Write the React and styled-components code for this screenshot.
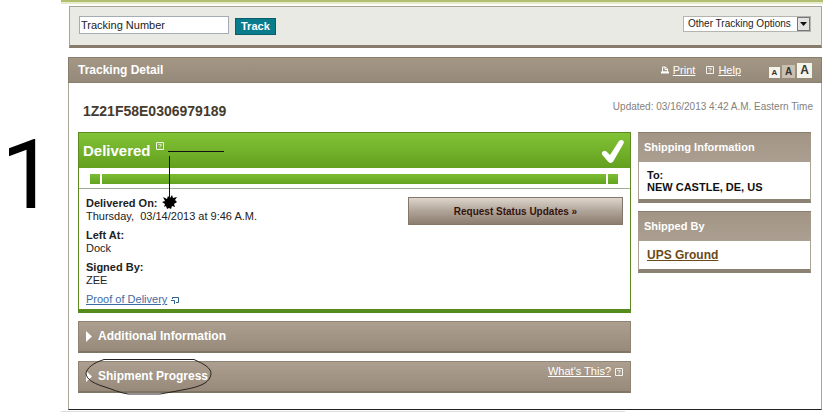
import React from 'react'
import styled, { createGlobalStyle } from 'styled-components';

export default function App() {
  return (
    <>
      <GlobalStyle />
      <Page>
        <Gutter>1</Gutter>
        <Main>
          <TopStrip />
          <SearchBar onSubmit={(e) => e.preventDefault()}>
            <SearchInput aria-label="Tracking Number" defaultValue="Tracking Number" />
            <TrackButton type="submit">Track</TrackButton>
            <SelectWrapper>
              <OptionsSelect aria-label="Other Tracking Options">
                <option>Other Tracking Options</option>
              </OptionsSelect>
              <SelectArrow><Caret /></SelectArrow>
            </SelectWrapper>
          </SearchBar>

          <Detail>
            <DetailHeader>
              <DetailTitle>Tracking Detail</DetailTitle>
              <Tools>
                <PrintIcon />
                <ToolLink href="#print">Print</ToolLink>
                <HelpIcon />
                <ToolLink href="#help">Help</ToolLink>
              </Tools>
              <TextSizes>
                <SizeButton $size={11} $font={8} aria-label="Small text">A</SizeButton>
                <SizeButton $size={13} $font={10} $active aria-label="Medium text">A</SizeButton>
                <SizeButton $size={15} $font={12} aria-label="Large text">A</SizeButton>
              </TextSizes>
            </DetailHeader>

            <NumberRow>
              <TrackingNumber>1Z21F58E0306979189</TrackingNumber>
              <Updated>Updated: 03/16/2013 4:42 A.M. Eastern Time</Updated>
            </NumberRow>

            <Columns>
              <Stack>
                <Status>
                  <StatusHeader>
                    <StatusTitle>Delivered</StatusTitle>
                    <RaisedIcon><HelpIcon /></RaisedIcon>
                    <CheckIcon />
                  </StatusHeader>
                  <Progress>
                    <Segment />
                    <Segment $grow />
                    <Segment />
                  </Progress>
                  <StatusBody>
                    <Facts>
                      <dt>Delivered On:</dt>
                      <dd>Thursday, &nbsp;03/14/2013 at 9:46 A.M.</dd>
                      <dt>Left At:</dt>
                      <dd>Dock</dd>
                      <dt>Signed By:</dt>
                      <dd>ZEE</dd>
                    </Facts>
                    <UpdatesButton type="button">Request Status Updates »</UpdatesButton>
                  </StatusBody>
                  <ProofRow>
                    <ProofLink href="#proof">Proof of Delivery</ProofLink>
                    <WindowIcon />
                  </ProofRow>
                  <DateArrow />
                </Status>
                <Section>
                  <SectionToggle type="button"><Triangle />Additional Information</SectionToggle>
                </Section>
                <Section>
                  <SectionToggle type="button"><Triangle />Shipment Progress</SectionToggle>
                  <SectionHelp>
                    <ToolLink href="#whats-this">What's This?</ToolLink>
                    <HelpIcon />
                  </SectionHelp>
                  <HandCircle />
                </Section>
              </Stack>

              <Side>
                <Card>
                  <CardTitle>Shipping Information</CardTitle>
                  <CardBody>
                    <strong>To:</strong>
                    <strong>NEW CASTLE, DE, US</strong>
                  </CardBody>
                </Card>
                <Card>
                  <CardTitle>Shipped By</CardTitle>
                  <CardBody>
                    <ServiceLink href="#ground">UPS Ground</ServiceLink>
                  </CardBody>
                </Card>
              </Side>
            </Columns>
          </Detail>
          <BottomRule />
        </Main>
      </Page>
    </>
  )
}

function Caret() {
  return (
    <svg width="7" height="4" viewBox="0 0 7 4">
      <path d="M0 0h7L3.5 4z" fill="#111" />
    </svg>
  )
}

function PrintIcon() {
  return (
    <svg width="8" height="8" viewBox="0 0 8 8">
      <path d="M1.5 6V1h3l2 2v3z" fill="#a39786" stroke="#fff" />
      <path d="M4 1v2.500h2.500" fill="none" stroke="#fff" />
      <path d="M0 5.500h8V7.500H0z" fill="#fff" />
    </svg>
  )
}

function HelpIcon() {
  return (
    <svg width="8" height="8" viewBox="0 0 8 8" fill="none" stroke="#f4f2ec">
      <path d="M.5.5h7v7h-7z" />
      <path d="M2.600 3V2.300h2.600v1.500H4v1M4 5.500v1" strokeWidth=".8" />
    </svg>
  )
}

function WindowIcon() {
  return (
    <svg width="8" height="8" viewBox="0 0 8 8" fill="none" stroke="#2f5f8c">
      <path d="M1.500 3V1.500h6v5H5" />
      <path d="M0 4.500h3.500V8" />
    </svg>
  )
}

function Triangle() {
  return (
    <svg width="6" height="11" viewBox="0 0 6 11">
      <path d="M0 0l6 5.500L0 11z" fill="#fff" />
    </svg>
  )
}

function CheckIcon() {
  return (
    <svg width="24" height="24" viewBox="0 0 24 24">
      <path d="M1 15.500C0 13 3.500 10.500 5.500 12.500L9 16L18 2C20 0 24 1.500 22.500 4.500L12.500 22C11 24.500 8.500 24.500 7 22.500z" fill="#fff" />
    </svg>
  )
}

function DateArrow() {
  return (
    <ArrowSvg width="66" height="64" viewBox="0 0 66 64">
      <path d="M8 4.500h56M9.500 9v42" fill="none" stroke="#111" />
      <path d="M3 50l4 2 1-3 2 2 2-3 1 3 4-1-2 3 2 2-3 2 1 3-3-1-1 3-2-1-2 1-1-3-2 1 1-3-3-2 3-1z" fill="#000" />
    </ArrowSvg>
  )
}

function HandCircle() {
  return (
    <CircleSvg width="128" height="38" viewBox="0 0 128 38">
      <path
        d="M19 1.500h90C114 4 122 7 125 12C127 15 126 21 120 25C112 30 101 31 92 33L75 36H43C35 35 27 31 17 28C8 25 1 21 1 15C2 10 8 5 19 1.500z"
        fill="none"
        stroke="#26221f"
      />
    </CircleSvg>
  )
}

const GlobalStyle = createGlobalStyle`
  * {
    box-sizing: border-box;
  }
  body {
    margin: 0;
    background: #fff;
    color: #222;
    font-family: "Liberation Sans", Arial, sans-serif;
    font-size: 11px;
    line-height: 13px;
  }
  svg {
    display: block;
    flex: none;
  }
  button, input, select {
    font-family: inherit;
    margin: 0;
  }
`

const Page = styled.div`
  display: flex;
`

const Gutter = styled.div`
  flex: none;
  width: 61px;
  padding: 116px 0 0 1px;
  color: #000;
  font-family: Roboto, sans-serif;
  font-size: 96px;
  line-height: 118px;
`

const Main = styled.main`
  flex: 1;
  min-width: 0;
`

const TopStrip = styled.div`
  height: 4px;
  background: #b3c071;
  border-bottom: 2px solid #e6ebc9;
`

const SearchBar = styled.form`
  display: flex;
  align-items: flex-start;
  height: 42px;
  margin: 2px 1px 9px 8px;
  padding: 9px 10px 0 9px;
  background: #e9eae4;
  border: 1px solid #a9a59a;
  border-bottom: 3px solid #887b6c;
`

const SearchInput = styled.input`
  width: 150px;
  height: 18px;
  padding: 0 1px;
  color: #222;
  background: #fff;
  border: 1px solid #a5acb2;
  font-size: 11px;
`

const TrackButton = styled.button`
  height: 17px;
  margin: 2px 0 0 6px;
  padding: 0 5px;
  color: #fff;
  background: #087c8d;
  border: 1px solid #075f6c;
  font-size: 11px;
  font-weight: bold;
  line-height: 15px;
`

const SelectWrapper = styled.div`
  display: flex;
  width: 128px;
  height: 16px;
  margin-left: auto;
  background: #fff;
  border: 1px solid #b5b5b0;
`

const OptionsSelect = styled.select`
  flex: 1;
  min-width: 0;
  padding: 0 0 0 4px;
  appearance: none;
  color: #222;
  background: none;
  border: 0;
  font-size: 10px;
  line-height: 14px;
`

const SelectArrow = styled.span`
  display: flex;
  align-items: center;
  justify-content: center;
  width: 13px;
  background: #e2e2e2;
  border: 1px solid #777;
  pointer-events: none;
`

const Detail = styled.section`
  margin: 0 1px 0 7px;
  padding-bottom: 16px;
  border: 1px solid #aaa698;
  border-top: 0;
  border-bottom: 1px solid #222;
`

const DetailHeader = styled.header`
  display: flex;
  align-items: center;
  height: 26px;
  margin: 0 -1px;
  padding: 0 9px 0 9px;
  color: #fff;
  background: linear-gradient(#a49785, #95897a);
  border: 1px solid #8a7e6f;
`

const DetailTitle = styled.h1`
  flex: 1;
  margin: 0;
  font-size: 12px;
`

const Tools = styled.div`
  display: flex;
  align-items: center;
  gap: 4px;

  a + svg {
    margin-left: 7px;
  }
`

const ToolLink = styled.a`
  color: #fff;
  font-size: 11px;
`

const TextSizes = styled.div`
  display: flex;
  align-items: flex-end;
  gap: 2px;
  margin-left: 28px;
`

const SizeButton = styled.button`
  width: ${(props) => props.$size}px;
  height: ${(props) => props.$size}px;
  padding: 0;
  color: #333;
  background: ${(props) => (props.$active ? '#c9c0b0' : '#f4f3ec')};
  border: 0;
  font-size: ${(props) => props.$font}px;
  font-weight: bold;
  line-height: ${(props) => props.$size}px;
`

const NumberRow = styled.div`
  display: flex;
  justify-content: space-between;
  height: 49px;
  padding: 16px 8px 0 14px;
`

const TrackingNumber = styled.h2`
  margin: 0;
  color: #453b2c;
  font-size: 14px;
  line-height: 24px;
`

const Updated = styled.span`
  color: #85817b;
  font-size: 10px;
  line-height: 16px;
`

const Columns = styled.div`
  display: grid;
  grid-template-columns: minmax(0, 1fr) 173px;
  gap: 7px;
  align-items: start;
  padding: 0 10px 0 9px;
`

const Stack = styled.div`
  display: grid;
  gap: 8px;
`

const Side = styled.aside`
  display: grid;
  gap: 8px;
`

const Status = styled.section`
  position: relative;
  height: 181px;
  border: 1px solid #5f8a22;
  border-bottom: 4px solid #568c1c;
`

const StatusHeader = styled.div`
  display: flex;
  align-items: center;
  height: 35px;
  padding: 0 5px 0 4px;
  color: #fff;
  background: linear-gradient(#82c336, #63a01f);

  > svg {
    margin-left: auto;
  }
`

const StatusTitle = styled.h3`
  margin: 0;
  font-size: 15px;
`

const RaisedIcon = styled.span`
  margin-left: 5px;
  padding-bottom: 9px;
`

const Progress = styled.div`
  display: flex;
  gap: 2px;
  padding: 6px 12px 4px 11px;
  border-bottom: 1px solid #9bb094;
`

const Segment = styled.span`
  flex: ${(props) => (props.$grow ? '1' : '0 0 10px')};
  height: 10px;
  background: linear-gradient(#7dbd32, #64a321);
`

const StatusBody = styled.div`
  display: flex;
  justify-content: space-between;
  align-items: flex-start;
  padding: 8px 7px 0;
`

const Facts = styled.dl`
  margin: 0;

  dt {
    font-weight: bold;
  }
  dd {
    margin: 0 0 6px;
  }
`

const UpdatesButton = styled.button`
  width: 215px;
  height: 28px;
  padding: 0;
  color: #35130f;
  background: linear-gradient(#ddd5cc, #b0a498 50%, #8c7e70);
  border: 1px solid #85786b;
  font-size: 10px;
  font-weight: bold;
`

const ProofRow = styled.div`
  display: flex;
  align-items: center;
  gap: 4px;
  padding: 0 7px;
`

const ProofLink = styled.a`
  color: #3e6ba5;
`

const Section = styled.section`
  position: relative;
  display: flex;
  align-items: flex-start;
  justify-content: space-between;
  height: 32px;
  background: linear-gradient(#ac9f90, #978a7a);
  border: 1px solid #8f8475;
  border-bottom: 2px solid #807465;
`

const SectionToggle = styled.button`
  display: flex;
  align-items: center;
  gap: 6px;
  height: 28px;
  padding: 0 7px;
  color: #fff;
  background: none;
  border: 0;
  font-size: 12px;
  font-weight: bold;
`

const SectionHelp = styled.div`
  display: flex;
  align-items: center;
  gap: 4px;
  padding: 3px 7px 0 0;
`

const Card = styled.section`
  background: #fff;
  border: 1px solid #aaa295;
  border-bottom: 4px solid #8b8273;
`

const CardTitle = styled.h3`
  margin: -1px -1px 0;
  padding: 0 6px;
  color: #fff;
  background: linear-gradient(#a29585, #ab9f91);
  border-top: 1px solid #8a7e6f;
  font-size: 11px;
  line-height: 29px;
`

const CardBody = styled.div`
  display: flex;
  flex-direction: column;
  align-items: flex-start;
  padding: 7px 8px 6px;
  color: #111;
  line-height: 12px;
`

const ServiceLink = styled.a`
  color: #6b4a17;
  font-size: 12px;
  font-weight: bold;
  line-height: 15px;
`

const BottomRule = styled.div`
  width: 74%;
  margin-top: 1px;
  border-bottom: 1px solid #ddd;
`

const ArrowSvg = styled.svg`
  position: absolute;
  left: 81px;
  top: 14px;
`

const CircleSvg = styled.svg`
  position: absolute;
  left: 6px;
  top: -4px;
  pointer-events: none;
`
